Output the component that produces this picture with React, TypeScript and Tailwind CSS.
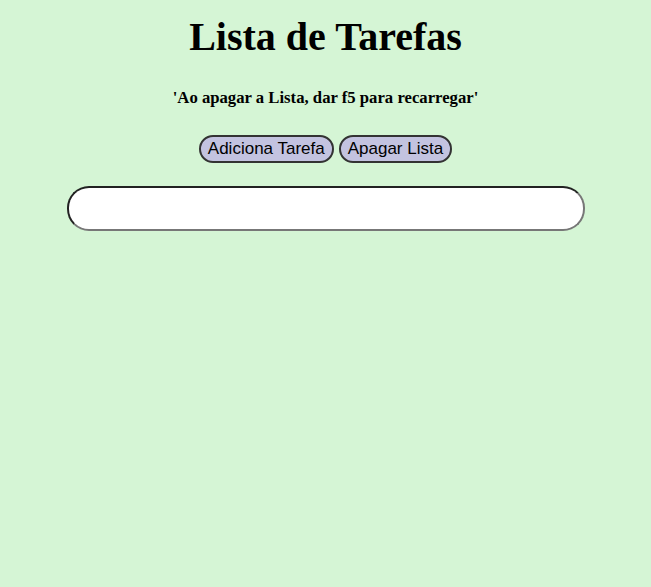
export default function App() {
  return (
    <div className="min-h-[587px] w-full bg-[#d5f5d5] flex flex-col items-center" style={{ fontFamily: '"Liberation Serif", serif' }}>
      <h1 className="mt-[14px] text-[40px] leading-[46px] font-bold text-black">Lista de Tarefas</h1>
      <h3 className="mt-[28px] text-[16.7px] leading-[20px] font-bold text-black">'Ao apagar a Lista, dar f5 para recarregar'</h3>
      <div className="mt-[27px] flex gap-[5px]" style={{ fontFamily: '"Liberation Sans", Arial, sans-serif' }}>
        <button className="h-[28px] px-[7px] rounded-full border-2 border-[#333] bg-[#c3c3e0] text-[17px] leading-[20px] text-black">Adiciona Tarefa</button>
        <button className="h-[28px] px-[7px] rounded-full border-2 border-[#333] bg-[#c3c3e0] text-[17px] leading-[20px] text-black">Apagar Lista</button>
      </div>
      <input className="mt-[23px] w-[518px] h-[45px] rounded-[22px] border-2 border-t-[#222] border-l-[#222] border-b-[#777] border-r-[#777] bg-white px-3 outline-none" />
    </div>
  );
}
